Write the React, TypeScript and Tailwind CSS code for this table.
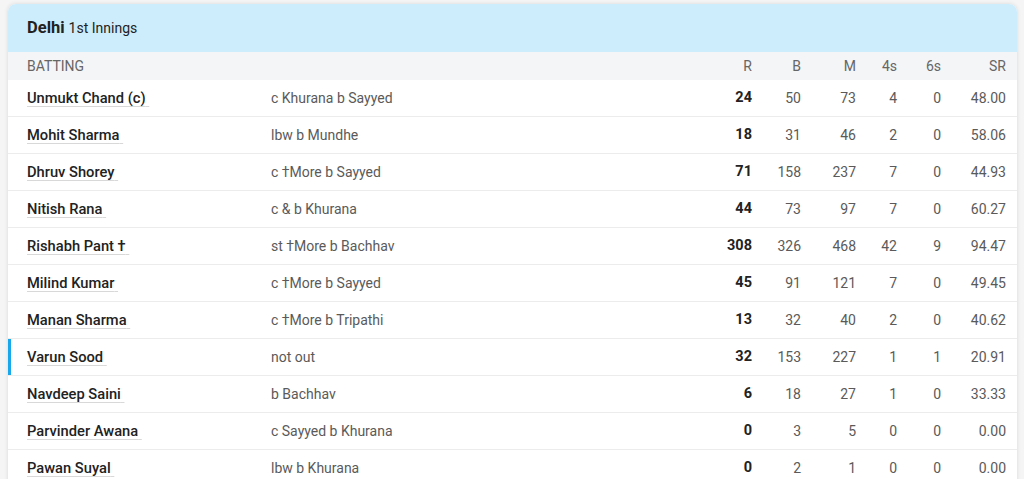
const batters = [
  { name: 'Unmukt Chand (c)', out: 'c Khurana b Sayyed', r: '24', b: '50', m: '73', f: '4', s: '0', sr: '48.00' },
  { name: 'Mohit Sharma', out: 'lbw b Mundhe', r: '18', b: '31', m: '46', f: '2', s: '0', sr: '58.06' },
  { name: 'Dhruv Shorey', out: 'c †More b Sayyed', r: '71', b: '158', m: '237', f: '7', s: '0', sr: '44.93' },
  { name: 'Nitish Rana', out: 'c & b Khurana', r: '44', b: '73', m: '97', f: '7', s: '0', sr: '60.27' },
  { name: 'Rishabh Pant †', out: 'st †More b Bachhav', r: '308', b: '326', m: '468', f: '42', s: '9', sr: '94.47' },
  { name: 'Milind Kumar', out: 'c †More b Sayyed', r: '45', b: '91', m: '121', f: '7', s: '0', sr: '49.45' },
  { name: 'Manan Sharma', out: 'c †More b Tripathi', r: '13', b: '32', m: '40', f: '2', s: '0', sr: '40.62' },
  { name: 'Varun Sood', out: 'not out', r: '32', b: '153', m: '227', f: '1', s: '1', sr: '20.91', batting: true },
  { name: 'Navdeep Saini', out: 'b Bachhav', r: '6', b: '18', m: '27', f: '1', s: '0', sr: '33.33' },
  { name: 'Parvinder Awana', out: 'c Sayyed b Khurana', r: '0', b: '3', m: '5', f: '0', s: '0', sr: '0.00' },
  { name: 'Pawan Suyal', out: 'lbw b Khurana', r: '0', b: '2', m: '1', f: '0', s: '0', sr: '0.00' },
]

const cols = 'grid grid-cols-[263px_1fr_60px_49px_55px_41px_44px_65px_11px]'

export default function App() {
  return (
    <div className="min-h-[479px] bg-[#f5f5f5] pl-2 pr-[7px] pt-1 font-['Roboto',sans-serif]">
      <div className="overflow-hidden rounded-t-lg bg-white shadow-[0_0_4px_rgba(0,0,0,0.12)]">
        {/* Innings header */}
        <div className="flex h-12 items-center bg-[#cdedfd] pl-[19px] text-[#222]">
          <span className="text-[16.5px] font-bold">Delhi</span>
          <span className="ml-1 text-[14px]">1st Innings</span>
        </div>

        {/* Column labels */}
        <div className={`${cols} h-7 items-center bg-[#f4f5f7] text-[14px] text-[#666]`}>
          <span className="pl-[19px]">BATTING</span>
          <span />
          <span className="text-right">R</span>
          <span className="text-right">B</span>
          <span className="text-right">M</span>
          <span className="text-right">4s</span>
          <span className="text-right">6s</span>
          <span className="text-right">SR</span>
          <span />
        </div>

        {batters.map((p) => (
          <div
            key={p.name}
            className={`${cols} relative h-[37px] items-center border-b border-[#ececec] text-[14px] text-[#5a5a5a]`}
          >
            {p.batting && <span className="absolute left-0 top-0 h-full w-[3px] bg-[#17a8ec]" />}
            <span className="pl-[19px]">
              <span className="text-[14.7px] font-medium text-[#222] underline decoration-[#d8d8d8] decoration-1 underline-offset-[3px]">
                {p.name}&nbsp;
              </span>
            </span>
            <span>{p.out}</span>
            <span className="text-right text-[14.5px] font-bold text-[#222]">{p.r}</span>
            <span className="text-right">{p.b}</span>
            <span className="text-right">{p.m}</span>
            <span className="text-right">{p.f}</span>
            <span className="text-right">{p.s}</span>
            <span className="text-right">{p.sr}</span>
            <span />
          </div>
        ))}
      </div>
    </div>
  )
}
